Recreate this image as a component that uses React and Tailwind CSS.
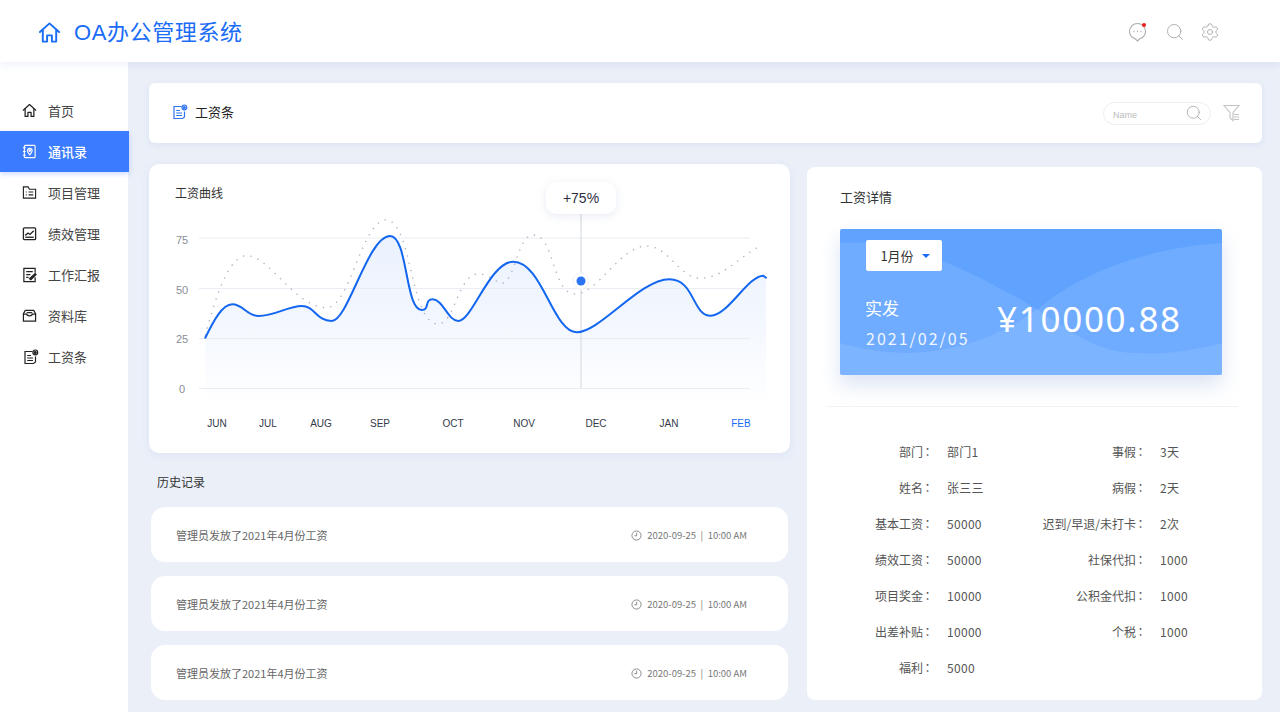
import { Search, Settings } from "lucide-react";

const cjk = "font-['Noto_Sans_CJK_SC','Noto_Sans',sans-serif]";

const curve =
  "M205.3 337.7 C213 322 222 304.3 232.3 304.3 C243 304.3 247 316 258.3 316 C275 316 288 306 301.7 306 C315 306 316 321 331.7 321 C348 321 368 236 390 236 C408 236 405 310 421.7 310 C430 310 424 299.3 432.7 299.3 C443 299.3 448 321 458.3 321 C472 321 490 261.7 513.3 261.7 C542 261.7 553 332.3 576.7 332.3 C600 332.3 640 279.3 669.3 279.3 C695 279.3 692 315.7 710.7 315.7 C728 315.7 748 275.7 763.3 275.7 L766 277.7";

const dotted =
  "M205.3 335 C215 300 228 255.7 246.7 255.7 C270 255.7 295 307.7 326.7 307.7 C350 307.7 362 220 386 220 C412 220 410 324 438 324 C455 324 458 274 478 274 C490 274 497 284 503 283 C515 280 518 235 533 235 C555 235 552 294 575 294 C598 294 620 246 646.7 246 C668 246 680 278.3 700 278.3 C722 278.3 738 258 758 247.3";

const months = [
  ["JUN", 217],
  ["JUL", 268],
  ["AUG", 321],
  ["SEP", 380],
  ["OCT", 453],
  ["NOV", 524],
  ["DEC", 596],
  ["JAN", 669],
  ["FEB", 741],
];

const details = [
  ["部门", "部门1", "事假", "3天"],
  ["姓名", "张三三", "病假", "2天"],
  ["基本工资", "50000", "迟到/早退/未打卡", "2次"],
  ["绩效工资", "50000", "社保代扣", "1000"],
  ["项目奖金", "10000", "公积金代扣", "1000"],
  ["出差补贴", "10000", "个税", "1000"],
  ["福利", "5000", "", ""],
];

function HomeIcon({ size = 16, className = "" }) {
  return (
    <svg width={size} height={size} viewBox="0 0 24 24" fill="none" stroke="currentColor" strokeWidth="2" strokeLinejoin="round" strokeLinecap="round" className={className}>
      <path d="M2 11.5 L12 2.5 L22 11.5" />
      <path d="M5 9.5 V21.5 H9.5 V15 H14.5 V21.5 H19 V9.5" />
    </svg>
  );
}

function SlipIcon({ size = 16, color = "currentColor" }) {
  return (
    <svg width={size} height={size} viewBox="0 0 16 16" fill="none" stroke={color} strokeWidth="1.2">
      <path d="M9.5 2.5 H2 V14.5 H10.5 L12.5 13 V7.5" />
      <path d="M4.2 6.5 H8 M4.2 9 H10 M4.2 11.5 H10" />
      <circle cx="12.3" cy="3.4" r="2.4" />
      <circle cx="12.3" cy="3.4" r="0.9" fill={color} />
    </svg>
  );
}

const navIcons = {
  home: <HomeIcon size={15} />,
  book: (
    <svg width="15" height="15" viewBox="0 0 16 16" fill="none" stroke="currentColor" strokeWidth="1.2">
      <rect x="2.5" y="1.5" width="11.5" height="13" rx="1" />
      <path d="M1 4 H4 M1 8 H4 M1 12 H4" />
      <path d="M8.3 11.5 C6.8 9.8 5.8 8.6 5.8 7.1 A2.5 2.5 0 0 1 10.8 7.1 C10.8 8.6 9.8 9.8 8.3 11.5 Z" />
      <circle cx="8.3" cy="7" r="0.8" />
    </svg>
  ),
  folder: (
    <svg width="15" height="15" viewBox="0 0 16 16" fill="none" stroke="currentColor" strokeWidth="1.2">
      <path d="M1.5 14 V2 H6.5 L8 4.5 H14.5 V14 Z" />
      <path d="M4 7.5 H5 M7 7.5 H12 M4 10.5 H5 M7 10.5 H12" />
    </svg>
  ),
  chart: (
    <svg width="15" height="15" viewBox="0 0 16 16" fill="none" stroke="currentColor" strokeWidth="1.4">
      <rect x="1.5" y="2" width="13" height="12.5" rx="1" />
      <path d="M3.5 10 L6.5 7.5 L8.5 9 L12.5 5" />
      <path d="M3.5 12 H12.5" />
    </svg>
  ),
  report: (
    <svg width="15" height="16" viewBox="0 0 16 17" fill="none" stroke="currentColor" strokeWidth="1.3">
      <path d="M14 6 V1.5 H2 V15.5 H14 V11" />
      <path d="M4.5 5 H11.5 M4.5 8 H9 M4.5 11 H7" />
      <path d="M8 12.5 L14 7 L15 8 L9.5 13.5 Z" fill="currentColor" />
    </svg>
  ),
  box: (
    <svg width="15" height="15" viewBox="0 0 16 16" fill="none" stroke="currentColor" strokeWidth="1.3">
      <path d="M1.5 14 V6 L3.5 2.5 H12.5 L14.5 6 V14 Z" />
      <path d="M1.5 6.5 H5 C5 9 11 9 11 6.5 H14.5" />
      <path d="M5 5 H11" />
    </svg>
  ),
  slip: (
    <span className="ml-[3px]">
      <SlipIcon size={16} />
    </span>
  ),
};

const navItems = [
  ["首页", "home"],
  ["通讯录", "book", true],
  ["项目管理", "folder"],
  ["绩效管理", "chart"],
  ["工作汇报", "report"],
  ["资料库", "box"],
  ["工资条", "slip"],
];

function HistoryRow() {
  return (
    <div className="flex h-[55px] items-center justify-between rounded-[14px] bg-white pl-[25px] pr-[41px] pt-[2px]">
      <span className="text-[11px] text-[#666]">管理员发放了2021年4月份工资</span>
      <span className="flex items-center text-[9.5px] text-[#777]">
        <svg width="11" height="11" viewBox="0 0 12 12" fill="none" stroke="#777" strokeWidth="0.9" className="mr-[5px]">
          <circle cx="6" cy="6" r="5" />
          <path d="M6.2 3 V6.3 H3.6" />
        </svg>
        2020-09-25
        <span className="mx-[4.5px]">|</span>
        10:00 AM
      </span>
    </div>
  );
}

function DetailLabel({ text }) {
  if (!text) return <span />;
  return (
    <span className="flex justify-end whitespace-nowrap">
      {text}
      <span className="flex w-[9px] justify-center font-['Noto_Sans_CJK_TC',sans-serif]">：</span>
    </span>
  );
}

function SalaryChart() {
  return (
    <svg width="641" height="289" viewBox="149 164 641 289" className="absolute left-0 top-0">
      <defs>
        <linearGradient id="area" x1="0" y1="236" x2="0" y2="405" gradientUnits="userSpaceOnUse">
          <stop offset="0" stopColor="#ebf2fe" />
          <stop offset="0.5" stopColor="#f3f7fe" />
          <stop offset="1" stopColor="#ffffff" />
        </linearGradient>
      </defs>
      <path d={`${curve} L766 405 L205.3 405 Z`} fill="url(#area)" />
      {[238, 288.5, 338.5, 388.5].map((y) => (
        <line key={y} x1="199" x2="750" y1={y} y2={y} stroke="#e9ecf2" strokeWidth="1" />
      ))}
      {[
        ["75", 244],
        ["50", 294],
        ["25", 343],
        ["0", 393],
      ].map(([label, y]) => (
        <text key={label} x="182" y={y} textAnchor="middle" fontSize="11" fill="#8a8d96" fontFamily="Liberation Sans">
          {label}
        </text>
      ))}
      <line x1="581" x2="581" y1="212" y2="388" stroke="#dfe2e8" strokeWidth="1.4" />
      <path d={dotted} fill="none" stroke="#aeb1b8" strokeWidth="1.6" strokeLinecap="round" strokeDasharray="0 7.5" />
      <path d={curve} fill="none" stroke="#1366f0" strokeWidth="2" strokeLinecap="round" />
      <circle cx="581" cy="281" r="8" fill="#ffffff" stroke="#f0f3fa" strokeWidth="1" />
      <circle cx="581" cy="281" r="4.5" fill="#2a73f3" />
      {months.map(([label, x]) => (
        <text key={label} x={x} y="427" textAnchor="middle" fontSize="10" fill={label === "FEB" ? "#1a6cf6" : "#333a4a"} fontFamily="Liberation Sans">
          {label}
        </text>
      ))}
    </svg>
  );
}

export default function App() {
  return (
    <div className={`flex h-[712px] flex-col overflow-hidden bg-[#eaeff8] text-[#333] ${cjk}`}>
      <header className="relative z-10 flex h-[62px] shrink-0 items-center justify-between bg-white pl-[38px] pr-[60px] shadow-[0_2px_8px_rgba(90,120,190,0.12)]">
        <div className="flex items-center gap-[13px] pt-[3px] text-[#1a6cf6]">
          <HomeIcon size={23} />
          <span className="text-[22px] leading-none tracking-[0.6px] font-['Liberation_Sans','Noto_Sans_CJK_SC',sans-serif]">OA办公管理系统</span>
        </div>
        <div className="flex items-center pt-[2px] text-[#aaa]">
          <div className="relative mr-[18px] h-[20px] w-[19px]">
            <svg width="19" height="20" viewBox="0 0 19 20" fill="none" stroke="#aaa" strokeWidth="1.1">
              <path d="M9.5 1.5 C5 1.5 1.5 5 1.5 9.5 C1.5 13.5 4.5 16 7 16.5 L9.5 19 L12 16.5 C14.5 16 17.5 13.5 17.5 9.5 C17.5 5 14 1.5 9.5 1.5 Z" />
              <path d="M5.5 9.5 H6.5 M9 9.5 H10 M12.5 9.5 H13.5" strokeWidth="1.4" />
            </svg>
            <span className="absolute right-[1px] top-[1px] h-[4px] w-[4px] rounded-full bg-[#f01d1d]" />
          </div>
          <Search size={20} strokeWidth={1.1} className="mr-[15px]" />
          <Settings size={20} strokeWidth={1.1} />
        </div>
      </header>

      <div className="flex min-h-0 flex-1">
        <aside className="w-[128px] shrink-0 bg-white pt-[28px]">
          {navItems.map(([label, icon, active]) => (
            <div
              key={label}
              className={`flex h-[41px] w-[129px] items-center gap-[11px] pl-[22px] text-[13px] ${
                active ? "relative bg-[#3b7cff] font-medium text-white shadow-[0_2px_5px_rgba(60,120,255,0.25)]" : "text-[#444]"
              }`}
            >
              <span className={`flex w-[15px] justify-center ${active ? "text-white" : "text-[#222]"}`}>{navIcons[icon]}</span>
              {label}
            </div>
          ))}
        </aside>

        <main className="flex-1 pl-[21px] pr-[18px] pt-[21px]">
          <div className="flex h-[60px] items-center justify-between rounded-[6px] bg-white pl-[23px] pr-[22px] shadow-[0_2px_6px_rgba(90,120,190,0.1)]">
            <div className="flex items-center gap-[7px] pb-[2px] text-[13px] text-[#222]">
              <SlipIcon size={16} color="#2f74f0" />
              工资条
            </div>
            <div className="flex items-center gap-[12px]">
              <div className="flex h-[23px] w-[108px] items-center justify-between rounded-full border border-[#eceef2] pl-[9px] pr-[7px]">
                <span className="pt-[5px] text-[9px] text-[#bbb] font-['Liberation_Sans',sans-serif]">Name</span>
                <Search size={18} strokeWidth={1.1} className="text-[#aaa]" />
              </div>
              <svg width="17" height="18" viewBox="0 0 17 18" fill="none" stroke="#c4c4c4" strokeWidth="1.1">
                <path d="M1 1.5 H16 L10 8.5 V16.5 L7 14 V8.5 Z" />
                <path d="M11 10.5 H16 M11 13 H16 M11 15.5 H16" />
              </svg>
            </div>
          </div>

          <div className="mt-[21px] flex gap-[17px]">
            <div className="w-[641px] shrink-0">
              <section className="relative h-[289px] rounded-[10px] bg-white shadow-[0_2px_8px_rgba(90,120,190,0.08)]">
                <SalaryChart />
                <h3 className="absolute left-[26px] top-[20px] text-[12px] font-normal text-[#333]">工资曲线</h3>
                <div className="absolute left-[397px] top-[18px] flex h-[32px] w-[70px] items-center justify-center rounded-[10px] bg-white text-[14px] text-[#2c3040] shadow-[0_2px_10px_rgba(90,110,160,0.14)] font-['Liberation_Sans',sans-serif]">
                  +75%
                </div>
              </section>

              <h3 className="h-[54px] pl-[8px] pt-[20px] text-[12px] font-normal text-[#333]">历史记录</h3>
              <div className="flex flex-col gap-[14px] px-[2px]">
                <HistoryRow />
                <HistoryRow />
                <HistoryRow />
              </div>
            </div>

            <section className="mt-[3px] h-[533px] flex-1 rounded-[8px] bg-white pt-[20px]">
              <h3 className="pl-[33px] text-[13px] font-normal leading-[19px] text-[#333]">工资详情</h3>
              <div className="relative ml-[33px] mt-[23px] h-[146px] w-[382px] overflow-hidden rounded-[2px] bg-[#5fa3ff] text-white shadow-[0_10px_20px_rgba(90,130,200,0.22)]">
                <svg width="382" height="146" viewBox="0 0 382 146" className="absolute left-0 top-0">
                  <path d="M0 14 C70 10 120 38 180 70 C225 96 250 124 297 124 C330 126 360 120 382 114 V146 H0 Z" fill="#fff" fillOpacity="0.1" />
                  <path d="M382 14 C320 18 260 36 213 68 C175 100 130 122 70 124 C45 124 20 120 0 114 V146 H382 Z" fill="#fff" fillOpacity="0.1" />
                </svg>
                <div className="absolute left-[26px] top-[11px] flex h-[31px] w-[76px] items-center justify-center gap-[8px] rounded-[2px] bg-white pl-[2px] text-[13px] text-[#333]">
                  1月份
                  <span className="h-0 w-0 border-x-[4px] border-t-[4px] border-x-transparent border-t-[#1a6cf6]" />
                </div>
                <div className="absolute left-[25px] top-[68px] text-[17px] leading-[22px]">实发</div>
                <div className="absolute left-[26px] top-[97px] text-[16px] leading-[24px] tracking-[2px] opacity-90">2021/02/05</div>
                <div className="absolute left-[157px] top-[64px] text-[35px] leading-[52px] tracking-[1.7px] font-['Noto_Sans',sans-serif]">¥10000.88</div>
              </div>
              <div className="ml-[20px] mr-[24px] mt-[31px] h-px bg-[#f1f2f5]" />
              <div className="mt-[27px] text-[12px] text-[#555]">
                {details.map(([a, b, c, d]) => (
                  <div key={a} className="grid h-[36px] grid-cols-[125px_88px_125px_1fr] items-center">
                    <DetailLabel text={a} />
                    <span className="pl-[15px] tracking-[0.3px]">{b}</span>
                    <DetailLabel text={c} />
                    <span className="pl-[15px] tracking-[0.3px]">{d}</span>
                  </div>
                ))}
              </div>
            </section>
          </div>
        </main>
      </div>
    </div>
  );
}
